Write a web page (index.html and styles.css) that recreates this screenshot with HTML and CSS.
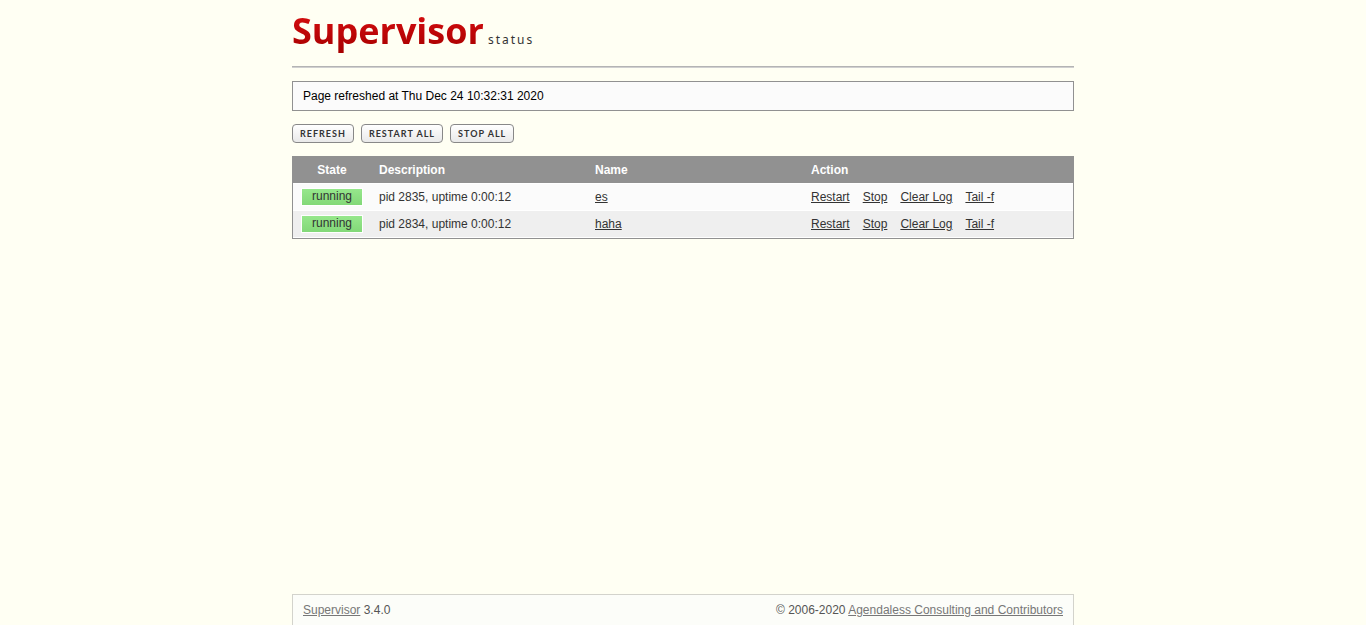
FILE: index.html
```html
<!DOCTYPE html>
<html lang="en">
<head>
  <meta charset="UTF-8">
  <title>Supervisor Status</title>
  <meta name="viewport" content="width=device-width, initial-scale=1">
  <link rel="stylesheet" href="styles.css">
</head>
<body>

  <div class="wrapper">
    <header class="header">
      <h1 class="logo">Supervisor</h1>
      <span class="logo-status">status</span>
    </header>

    <main>
      <div class="status-message">Page refreshed at Thu Dec 24 10:32:31 2020</div>

      <div class="buttons">
        <button type="button">REFRESH</button>
        <button type="button">RESTART ALL</button>
        <button type="button">STOP ALL</button>
      </div>

      <table class="processes">
        <thead>
          <tr>
            <th class="state">State</th>
            <th class="desc">Description</th>
            <th class="name">Name</th>
            <th class="action">Action</th>
          </tr>
        </thead>
        <tbody>
          <tr>
            <td class="state"><span class="running">running</span></td>
            <td>pid 2835, uptime 0:00:12</td>
            <td><a href="#">es</a></td>
            <td>
              <div class="actions">
                <a href="#">Restart</a>
                <a href="#">Stop</a>
                <a href="#">Clear Log</a>
                <a href="#">Tail -f</a>
              </div>
            </td>
          </tr>
          <tr class="shade">
            <td class="state"><span class="running">running</span></td>
            <td>pid 2834, uptime 0:00:12</td>
            <td><a href="#">haha</a></td>
            <td>
              <div class="actions">
                <a href="#">Restart</a>
                <a href="#">Stop</a>
                <a href="#">Clear Log</a>
                <a href="#">Tail -f</a>
              </div>
            </td>
          </tr>
        </tbody>
      </table>
    </main>

    <footer class="footer">
      <div><a href="#">Supervisor</a> 3.4.0</div>
      <div>&copy; 2006-2020 <a href="#">Agendaless Consulting and Contributors</a></div>
    </footer>
  </div>

</body>
</html>
```
FILE: styles.css
```css
body {
  margin: 0;
  font-family: "Liberation Sans", Arial, sans-serif;
  font-size: 12px;
  line-height: 16px;
  background-color: #fffff3;
  color: #333;
}
a {
  color: #333;
}
.wrapper {
  display: flex;
  flex-direction: column;
  max-width: 782px;
  min-height: 100vh;
  margin: 0 auto;
}
main {
  flex: 1;
}
.header {
  display: flex;
  align-items: baseline;
  gap: 4px;
  padding: 7px 0 11px;
  margin-bottom: 14px;
  border-bottom: 1px solid #b4b4b4;
  box-shadow: 0 1px #d0d0d0;
}
.logo {
  margin: 0;
  font-family: "Open Sans", sans-serif;
  font-size: 36px;
  font-weight: bold;
  line-height: 48px;
  color: transparent;
  background: linear-gradient(#d80e10 10%, #a80000 90%);
  -webkit-background-clip: text;
  background-clip: text;
}
.logo-status {
  font-family: "Noto Sans", sans-serif;
  font-size: 12px;
  letter-spacing: 2px;
}
.status-message {
  padding: 6px 10px;
  margin-bottom: 13px;
  background: #fbfbfb;
  border: 1px solid #919191;
  color: #000;
}
.buttons {
  display: flex;
  gap: 7px;
  margin-bottom: 13px;
}
.buttons button {
  height: 19px;
  padding: 0 7px;
  font-family: Lato, sans-serif;
  font-size: 9px;
  font-weight: bold;
  letter-spacing: 1px;
  line-height: 17px;
  color: #333;
  background: linear-gradient(#fff, #e9e9e9);
  border: 1px solid #888;
  border-radius: 4px;
  cursor: pointer;
}
.buttons button:hover {
  background: #fff;
}
.processes {
  width: 100%;
  table-layout: fixed;
  border: 1px solid #919191;
  border-top: none;
  border-spacing: 0;
}
.processes th,
.processes td {
  padding: 5px 8px;
  text-align: left;
}
.processes th {
  padding: 6px 8px 5px;
  background: #919191;
  color: #fff;
}
.processes td {
  background: #fbfbfb;
  border-bottom: 1px solid #fff;
}
.processes tbody tr:first-child td {
  border-top: 1px solid #fff;
}
.processes .shade td {
  background: #efefef;
}
.processes .state {
  width: 62px;
  text-align: center;
}
.processes td.state {
  padding: 4px 8px;
}
.processes .desc,
.processes .name {
  width: 200px;
}
.running {
  display: block;
  height: 16px;
  line-height: 14px;
  background: linear-gradient(#96e78c, #82d878);
  border: 1px solid #fff;
}
.actions {
  display: flex;
  gap: 13px;
}
.footer {
  display: flex;
  justify-content: space-between;
  padding: 7px 10px;
  background: #fcfdf9;
  border: 1px solid #d3d3cc;
  border-bottom: none;
  color: #555;
}
.footer a {
  color: #777;
}
```
